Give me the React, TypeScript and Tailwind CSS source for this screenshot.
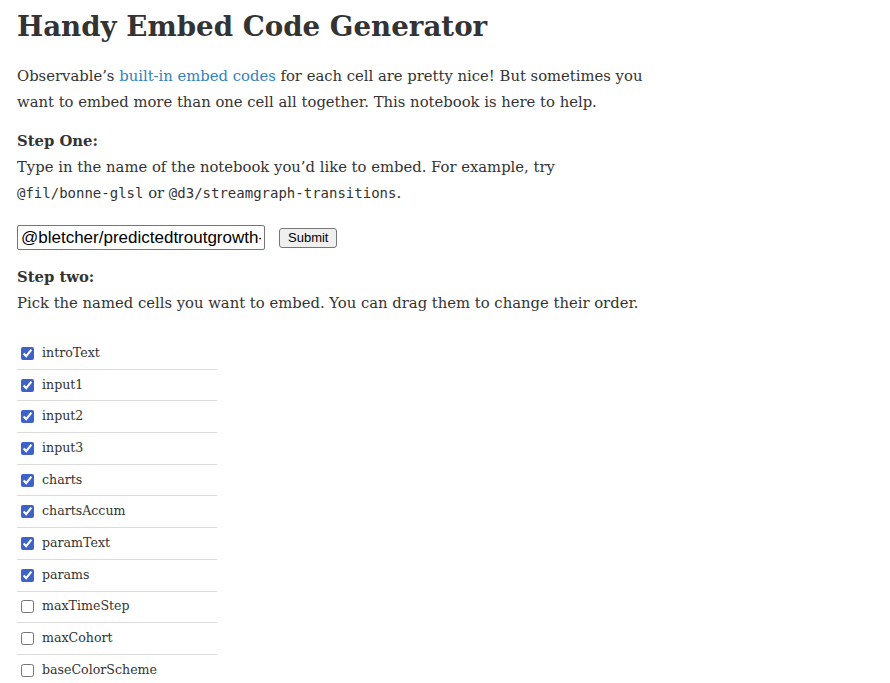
import React from 'react';

const cells = [
  { name: 'introText', on: true },
  { name: 'input1', on: true },
  { name: 'input2', on: true },
  { name: 'input3', on: true },
  { name: 'charts', on: true },
  { name: 'chartsAccum', on: true },
  { name: 'paramText', on: true },
  { name: 'params', on: true },
  { name: 'maxTimeStep', on: false },
  { name: 'maxCohort', on: false },
  { name: 'baseColorScheme', on: false },
];

const serif = { fontFamily: "'DejaVu Serif', 'Liberation Serif', serif" };
const mono = { fontFamily: "'DejaVu Sans Mono', monospace" };

export default function App() {
  return (
    <div className="min-h-screen bg-white text-[#333] px-[17px]" style={serif}>
      <h1 className="pt-[4px] text-[27.7px] font-bold leading-[46px] text-[#333]">
        Handy Embed Code Generator
      </h1>

      <p className="mt-[13px] text-[14.8px] leading-[26px]">
        Observable’s <a className="text-[#3182bd]">built-in embed codes</a> for each cell are pretty nice! But sometimes you
        <br />
        want to embed more than one cell all together. This notebook is here to help.
      </p>

      <p className="mt-[13px] text-[14.8px] leading-[26px]">
        <b>Step One:</b>
        <br />
        Type in the name of the notebook you’d like to embed. For example, try
        <br />
        <code className="text-[14px]" style={mono}>@fil/bonne-glsl</code> or{' '}
        <code className="text-[14px]" style={mono}>@d3/streamgraph-transitions</code>.
      </p>

      <div className="mt-[19px] flex items-center gap-[14px]">
        <input
          readOnly
          value="@bletcher/predictedtroutgrowth-"
          className="w-[248px] h-[25px] border border-[#767676] rounded-[2px] px-[3px] text-[17px] text-black outline-none"
          style={{ fontFamily: "'Liberation Sans', Arial, sans-serif" }}
        />
        <button
          className="h-[20px] px-[8px] border border-[#767676] rounded-[3px] bg-[#efefef] text-[13px] text-black leading-none"
          style={{ fontFamily: "'Liberation Sans', Arial, sans-serif" }}
        >
          Submit
        </button>
      </div>

      <p className="mt-[14px] text-[14.8px] leading-[26px]">
        <b>Step two:</b>
        <br />
        Pick the named cells you want to embed. You can drag them to change their order.
      </p>

      <ul className="mt-[22px] w-[200px]">
        {cells.map((c, i) => (
          <li
            key={c.name}
            className={`flex items-center h-[31.7px] ${i < cells.length - 1 ? 'border-b border-[#dcdcdc]' : ''}`}
          >
            <input
              type="checkbox"
              readOnly
              checked={c.on}
              className="ml-[4px] w-[13px] h-[13px] accent-[#3f62c8]"
            />
            <span className="ml-[8px] text-[12.6px] text-[#333]">{c.name}</span>
          </li>
        ))}
      </ul>
    </div>
  );
}
